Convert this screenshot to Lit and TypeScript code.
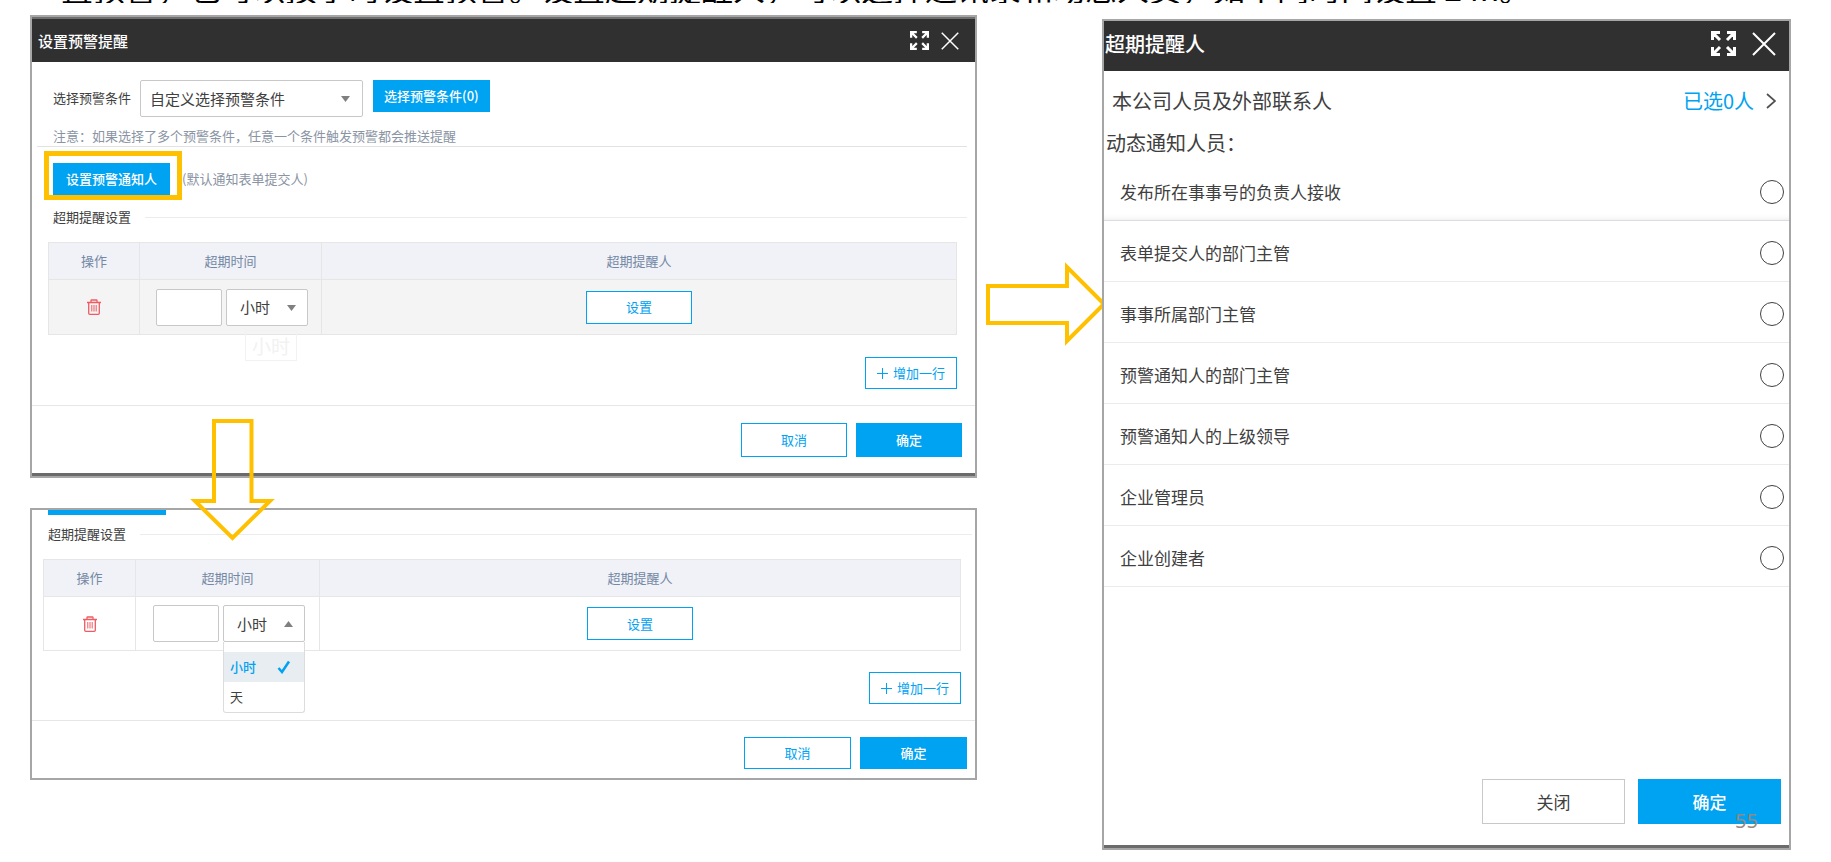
import { LitElement, html, css, svg, nothing } from "lit";
import { customElement, property } from "lit/decorators.js";

const shared = css`
  *, *::before, *::after { box-sizing: border-box; }
  :host {
    display: block;
    font-family: "Noto Sans CJK SC", "Noto Sans", sans-serif;
    font-size: 13px;
    line-height: 20px;
    color: #404040;
  }
  button, input, select { font: inherit; margin: 0; border-radius: 0; }
  button { cursor: pointer; white-space: nowrap; }
  .panel { border: 2px solid #a6a6a6; background: #fff; }
  .bar {
    display: flex;
    align-items: center;
    justify-content: space-between;
    background: #303030;
    color: #fff;
    font-weight: 500;
  }
  .bar h2 { margin: 0; font: inherit; }
  .tools { display: flex; align-items: center; }
  .tool { display: flex; padding: 0; border: 0; background: none; color: #fff; }
  .btn {
    height: 32px;
    padding: 0 10px;
    border: 1px solid #00a2f2;
    background: #fff;
    color: #00a2f2;
  }
  .solid { background: #00a2f2; color: #fff; font-weight: 500; }
  .wide { width: 106px; }
`;

const expandIcon = svg`
  <g fill="none" stroke="currentColor" stroke-width="3">
    <path d="M1.5 9V1.5H9M2 2l7 7M16 1.5h7.500V9M23 2l-7 7M1.500 16v7.500H9M2 23l7-7M23.500 16v7.500H16M23 23l-7-7" />
  </g>`;

const tools = (size: number, close: number) => html`
  <div class="tools">
    <button class="tool" aria-label="最大化">
      <svg width=${size} height=${size} viewBox="0 0 25 25">${expandIcon}</svg>
    </button>
    <button class="tool" aria-label="关闭窗口">
      <svg width=${close} height=${close} viewBox="0 0 24 24">
        <path d="M1 1L23 23M23 1L1 23" fill="none" stroke="currentColor" stroke-width="2" />
      </svg>
    </button>
  </div>`;

@customElement("overdue-table")
class OverdueTable extends LitElement {
  @property({ type: Boolean, reflect: true }) open = false;

  static styles = [shared, css`
    .head { display: flex; align-items: center; gap: 14px; padding: 0 8px 0 16px; }
    .head h3 { margin: 0; font: inherit; }
    .head i { flex: 1; height: 1px; background: #ececec; }
    .grid {
      width: 100%;
      table-layout: fixed;
      border-collapse: collapse;
      margin-top: 15px;
      text-align: center;
    }
    .holder { padding: 0 18px 0 11px; }
    .op { width: 91px; }
    .time { width: 182px; }
    th, td { border: 1px solid #e6e6e6; padding: 0; }
    th { height: 37px; background: #f1f2f7; color: #7388a5; font-weight: 400; }
    td { height: 55px; background: #f4f4f4; }
    .del { display: block; margin: 0 auto; border: 0; padding: 0; background: none; color: #ef5b62; }
    .del svg { display: block; }
    .fields { display: flex; gap: 4px; justify-content: center; padding-left: 3px; }
    .num { width: 66px; height: 37px; border: 1px solid #c8c8c8; border-radius: 2px; background: #fff; }
    .pick { position: relative; width: 82px; }
    .pick select {
      display: block;
      width: 100%;
      height: 37px;
      padding: 0 0 0 13px;
      border: 1px solid #c8c8c8;
      border-radius: 2px;
      appearance: none;
      background: #fff;
      color: #404040;
      font-size: 15px;
    }
    .caret { position: absolute; right: 12px; top: 16px; pointer-events: none; }
    .menu {
      position: absolute;
      z-index: 2;
      top: 37px;
      left: 0;
      width: 100%;
      margin: 0;
      padding: 10px 0 0;
      list-style: none;
      text-align: left;
      border: 1px solid #dcdcdc;
      border-top: 0;
      border-radius: 0 0 3px 3px;
      background: #fff;
    }
    .menu li {
      display: flex;
      align-items: center;
      justify-content: space-between;
      height: 30px;
      padding: 0 13px 0 6px;
    }
    .menu .on { background: #e8edf1; color: #00a2f2; font-weight: 500; }
    .set { display: block; height: 33px; margin: 0 auto; }
    .more { display: flex; justify-content: flex-end; padding-top: 22px; }
    .add { display: flex; align-items: center; gap: 5px; padding: 0 11px; }
    :host([open]) .holder { padding: 0 14px 0 11px; }
    :host([open]) .head { padding-right: 3px; }
    :host([open]) td { background: #fff; height: 54px; }
    :host([open]) .op { width: 92px; }
    :host([open]) .time { width: 184px; }
    :host([open]) .more { padding-top: 21px; }
  `];

  render() {
    return html`
      <div class="head"><h3>超期提醒设置</h3><i></i></div>
      <div class="holder">
        <table class="grid">
          <colgroup><col class="op"><col class="time"><col></colgroup>
          <thead><tr><th>操作</th><th>超期时间</th><th>超期提醒人</th></tr></thead>
          <tbody>
            <tr>
              <td>
                <button class="del" aria-label="删除">
                  <svg width="14" height="16" viewBox="0 0 14 16" fill="none" stroke="currentColor">
                    <path d="M0 3.500H14M4 3V1.500Q4 1 4.500 1H9.500Q10 1 10 1.500V3" stroke-width="1.300" />
                    <path d="M1.700 4V14.200Q1.700 15.300 2.800 15.300H11.200Q12.300 15.300 12.300 14.200V4" stroke-width="1.300" />
                    <path d="M4.800 6V12.500M7 6V12.500M9.200 6V12.500" />
                  </svg>
                </button>
              </td>
              <td>
                <div class="fields">
                  <input class="num" type="text" aria-label="超期时间">
                  <div class="pick">
                    <select aria-label="时间单位"><option>小时</option><option>天</option></select>
                    <svg class="caret" width="9" height="6" viewBox="0 0 9 6">
                      <path d=${this.open ? "M0 6L4.5 0L9 6Z" : "M0 0H9L4.5 6Z"} fill="#808080" />
                    </svg>
                    ${this.open ? html`
                      <ul class="menu">
                        <li class="on">小时
                          <svg width="14" height="14" viewBox="0 0 14 14">
                            <path d="M1.500 8L5 12L12 1.500" fill="none" stroke="#00a2f2" stroke-width="2.500" />
                          </svg>
                        </li>
                        <li>天</li>
                      </ul>` : nothing}
                  </div>
                </div>
              </td>
              <td><button class="btn set wide">设置</button></td>
            </tr>
          </tbody>
        </table>
        <div class="more">
          <button class="btn add">
            <svg width="11" height="11" viewBox="0 0 11 11"><path d="M5.500 0V11M0 5.500H11" stroke="currentColor" /></svg>
            增加一行
          </button>
        </div>
      </div>`;
  }
}

@customElement("warning-dialog")
class WarningDialog extends LitElement {
  static styles = [shared, css`
    .panel { position: relative; }
    .bar { height: 45px; padding: 0 16px 0 6px; font-size: 15px; border-top: 2px solid #6f6f6f; }
    .tools { gap: 12px; }
    .rule { padding: 18px 0 0; margin: 0 8px 0 5px; border-bottom: 1px solid #e2e2e2; }
    .row { display: flex; align-items: flex-start; padding-left: 16px; }
    .row label { line-height: 36px; width: 87px; }
    .pick { position: relative; width: 223px; margin-right: 10px; }
    .pick select {
      display: block;
      width: 100%;
      height: 37px;
      padding: 0 8px 0 9px;
      border: 1px solid #c8c8c8;
      border-radius: 2px;
      appearance: none;
      background: #fff;
      color: #404040;
      font-size: 15px;
    }
    .caret { position: absolute; right: 13px; top: 16px; pointer-events: none; }
    .note { margin: 9px 0 0; padding-left: 16px; color: #8a94a3; }
    .notify { display: flex; align-items: center; padding: 16px 0 12px 21px; gap: 12px; color: #8a94a3; }
    .mark { position: relative; }
    .mark .btn { width: 117px; }
    .mark::after {
      content: "";
      position: absolute;
      inset: -12px -12px -5px -9px;
      border: 5px solid #ffc000;
    }
    .ghost {
      position: absolute;
      left: 213px;
      top: 313px;
      padding: 0 6px;
      border: 1px solid #f2f2f2;
      color: #f2f2f2;
      font-size: 19px;
      line-height: 29px;
    }
    overdue-table { padding-left: 5px; }
    .foot {
      display: flex;
      justify-content: flex-end;
      gap: 9px;
      margin-top: 16px;
      padding: 17px 13px 16px;
      border-top: 1px solid #e6e6e6;
      border-bottom: 3px solid #6b6b6b;
    }
    .foot .btn { height: 34px; }
  `];

  render() {
    return html`
      <section class="panel">
        <header class="bar"><h2>设置预警提醒</h2>${tools(19, 18)}</header>
        <div class="rule">
          <div class="row">
            <label for="cond">选择预警条件</label>
            <div class="pick">
              <select id="cond"><option>自定义选择预警条件</option></select>
              <svg class="caret" width="9" height="6" viewBox="0 0 9 6"><path d="M0 0H9L4.5 6Z" fill="#808080" /></svg>
            </div>
            <button class="btn solid">选择预警条件(0)</button>
          </div>
          <p class="note">注意：如果选择了多个预警条件，任意一个条件触发预警都会推送提醒</p>
        </div>
        <div class="notify">
          <span class="mark"><button class="btn solid">设置预警通知人</button></span>
          <span>(默认通知表单提交人)</span>
        </div>
        <overdue-table></overdue-table>
        <footer class="foot">
          <button class="btn wide">取消</button>
          <button class="btn solid wide">确定</button>
        </footer>
        <span class="ghost">小时</span>
      </section>`;
  }
}

@customElement("unit-dialog")
class UnitDialog extends LitElement {
  static styles = [shared, css`
    .strip { width: 118px; height: 5px; margin: 0 0 9px 16px; background: #00a2f2; }
    .foot {
      display: flex;
      justify-content: flex-end;
      gap: 9px;
      margin-top: 16px;
      padding: 16px 8px 9px;
      border-top: 1px solid #e6e6e6;
    }
    .foot .btn { width: 107px; }
  `];

  render() {
    return html`
      <section class="panel">
        <div class="strip"></div>
        <overdue-table open></overdue-table>
        <footer class="foot">
          <button class="btn">取消</button>
          <button class="btn solid">确定</button>
        </footer>
      </section>`;
  }
}

@customElement("person-dialog")
class PersonDialog extends LitElement {
  people = [
    "发布所在事事号的负责人接收",
    "表单提交人的部门主管",
    "事事所属部门主管",
    "预警通知人的部门主管",
    "预警通知人的上级领导",
    "企业管理员",
    "企业创建者",
  ];

  static styles = [shared, css`
    .panel { position: relative; font-size: 20px; line-height: 30px; }
    .bar { height: 50px; padding: 0 13px 5px 1px; }
    .tools { gap: 16px; }
    .company { display: flex; justify-content: space-between; padding: 15px 13px 0 8px; }
    .company a { display: flex; align-items: center; gap: 12px; color: #00a2f2; text-decoration: none; }
    .title { margin: 12px 0 0; padding-left: 2px; }
    .list { margin: 2px 0 0; padding: 0; list-style: none; }
    .list li { height: 61px; padding: 5px 5px 0 16px; border-bottom: 1px solid #ebebee; }
    .list li:first-child { border-bottom-color: #dcdce2; box-shadow: inset 0 -6px 6px -6px #e6e6ea; }
    .list label { display: flex; align-items: center; justify-content: space-between; height: 54px; font-size: 17px; }
    .list input {
      width: 24px;
      height: 24px;
      appearance: none;
      border: 1px solid #404040;
      border-radius: 50%;
      background: #fff;
    }
    .foot {
      display: flex;
      justify-content: flex-end;
      gap: 13px;
      margin-top: 192px;
      padding: 0 8px 21px;
      border-bottom: 3px solid #6b6b6b;
    }
    .foot .btn { width: 143px; height: 45px; font-size: 17px; }
    .foot .plain { border-color: #c8c8c8; color: #404040; }
    .page {
      position: absolute;
      right: 31px;
      bottom: 12px;
      color: #95887f;
      font-family: "Noto Sans", sans-serif;
    }
  `];

  render() {
    return html`
      <section class="panel">
        <header class="bar"><h2>超期提醒人</h2>${tools(25, 24)}</header>
        <div class="company">
          <span>本公司人员及外部联系人</span>
          <a href="#">已选0人
            <svg width="10" height="16" viewBox="0 0 10 16"><path d="M1 1L9 8L1 15" fill="none" stroke="#505050" stroke-width="1.700" /></svg>
          </a>
        </div>
        <p class="title">动态通知人员：</p>
        <ul class="list">
          ${this.people.map((name) => html`<li><label>${name}<input type="radio" name="person"></label></li>`)}
        </ul>
        <footer class="foot">
          <button class="btn plain">关闭</button>
          <button class="btn solid">确定</button>
        </footer>
        <span class="page">55</span>
      </section>`;
  }
}

@customElement("app-root")
class AppRoot extends LitElement {
  static styles = [shared, css`
    :host { background: #fff; }
    .intro {
      display: flex;
      align-items: flex-end;
      height: 3px;
      overflow: hidden;
      padding-left: 61px;
      font-size: 32px;
      line-height: 32px;
      color: #000;
      white-space: nowrap;
    }
    .page {
      display: grid;
      grid-template-columns: 947fr 689fr;
      column-gap: 125px;
      align-items: start;
      padding: 12px 40px 12px 30px;
    }
    .left { position: relative; display: grid; gap: 30px; }
    .right { padding-top: 4px; }
    .across { position: absolute; left: 100%; top: 247px; margin-left: 9px; }
    .down { position: absolute; left: 160px; top: 404px; }
  `];

  render() {
    return html`
      <div class="intro"><span>置预警，也可以按小时设置预警。设置超期提醒人，可以选择通讯录和动态人员，如不同时间设置 24h。</span></div>
      <main class="page">
        <div class="left">
          <warning-dialog></warning-dialog>
          <unit-dialog></unit-dialog>
          <svg class="across" width="121" height="84" viewBox="0 0 121 84">
            <path d="M2 24H81V5L118 42L81 79V61H2Z" fill="none" stroke="#ffc000" stroke-width="4" />
          </svg>
          <svg class="down" width="85" height="122" viewBox="0 0 85 122">
            <path d="M24 2H61.500V82H80L42.500 119L5 82H24Z" fill="none" stroke="#ffc000" stroke-width="4" />
          </svg>
        </div>
        <div class="right"><person-dialog></person-dialog></div>
      </main>`;
  }
}
